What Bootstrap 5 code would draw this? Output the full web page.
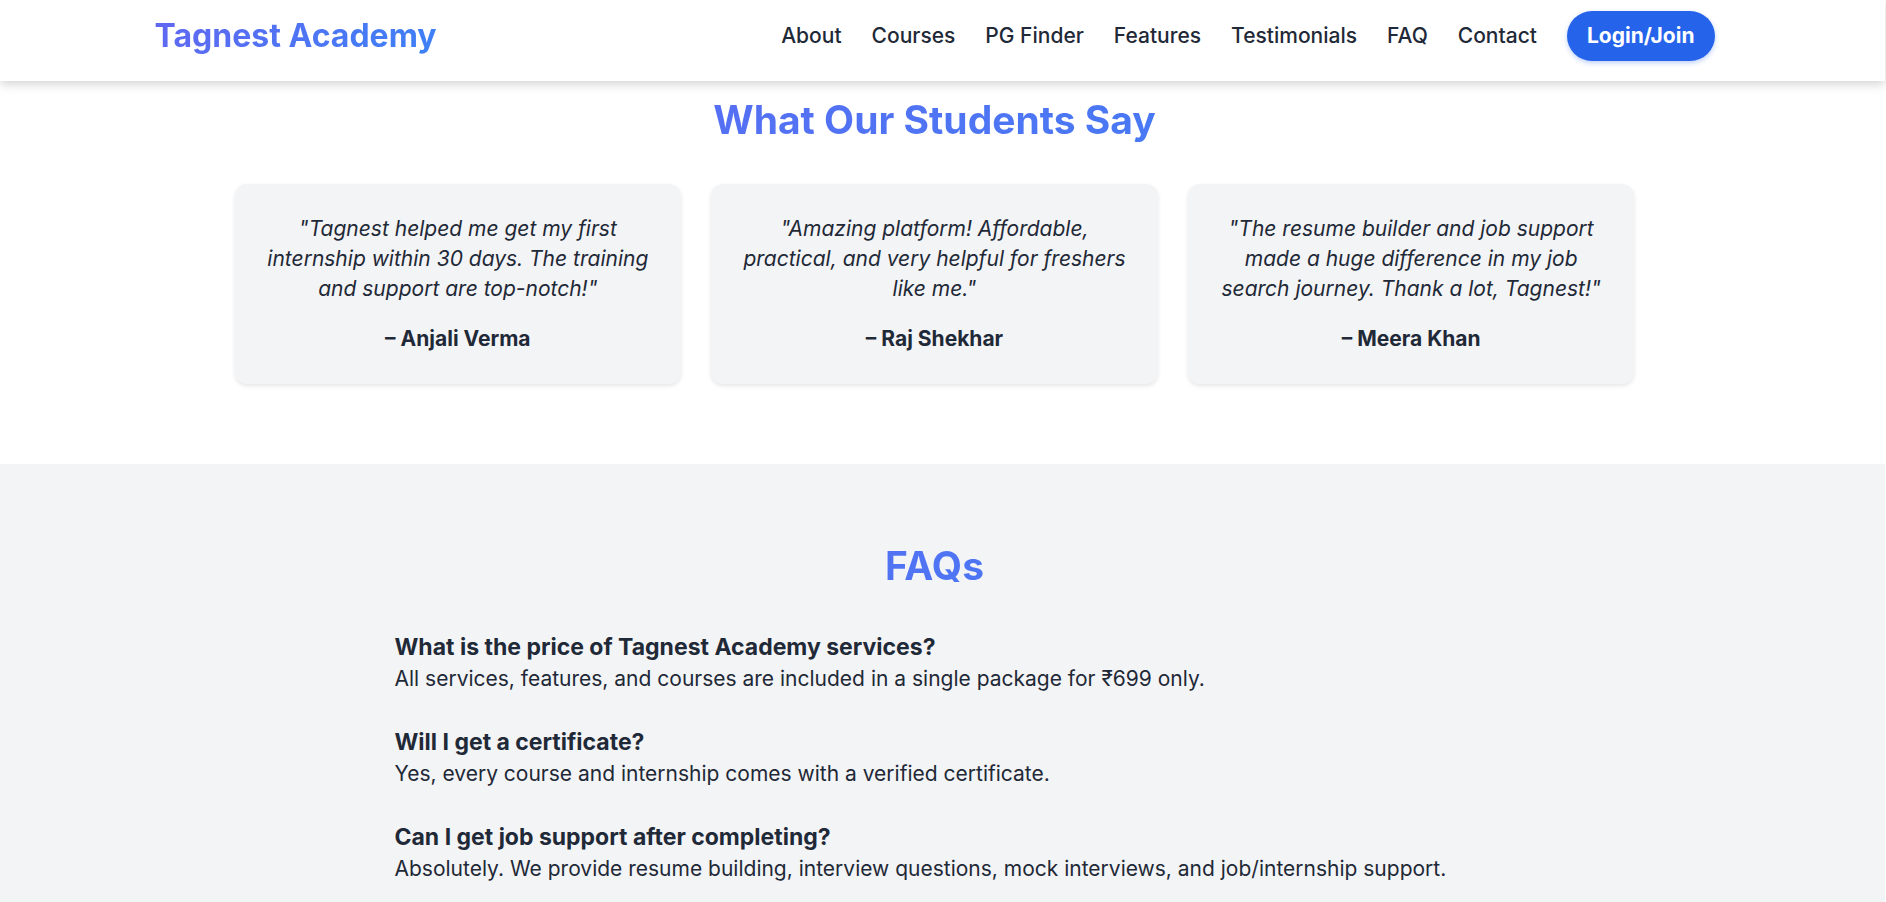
<!DOCTYPE html>
<html lang="en">
<head>
<meta charset="utf-8">
<meta name="viewport" content="width=device-width, initial-scale=1">
<title>Tagnest Academy</title>
<link href="https://cdn.jsdelivr.net/npm/bootstrap@5.3.0/dist/css/bootstrap.min.css" rel="stylesheet">
<style>
  :root { --ink: #1f2937; --mist: #f3f4f6; --brand: #2563eb; }
  html { background: #fff; }
  body {
    font-family: Inter, "Open Sans", sans-serif;
    font-size: 21px; line-height: 30px;
    color: var(--ink); background: #fff;
    padding-right: 1px;
  }
  .band { padding-right: 16px; }
  .wrap { width: 100%; margin: 0 auto; padding: 0 20px; }
  .wrap-nav { max-width: 1600px; }
  .wrap-cards { max-width: 1440px; }
  .wrap-faq { max-width: 1120px; }

  .topbar { background: #fff; padding-top: 11px; padding-bottom: 20px; box-shadow: 0 3px 10px rgba(0, 0, 0, .18); z-index: 10; }
  .tint { background: linear-gradient(135deg, #6366f1, #3b82f6); -webkit-background-clip: text; background-clip: text; color: transparent; }
  .logo { font-size: 32px; line-height: 48px; font-weight: 700; text-decoration: none; }
  .logo:hover { color: transparent; }
  .menu { column-gap: 30px; }
  .menu .nav-link { color: var(--ink); font-weight: 500; padding: 0; }
  .btn-join {
    font-size: 21px; line-height: 30px; font-weight: 700; color: #fff;
    background: var(--brand); border: 0; border-radius: 25px;
    padding: 10px 20px; box-shadow: 0 2px 5px rgba(37, 99, 235, .3);
  }
  .btn-join:hover { background: #1d4ed8; color: #fff; }

  .title { font-size: 39px; line-height: 48px; font-weight: 700; text-align: center; margin-bottom: 40px; }
  .voices { padding-top: 15px; padding-bottom: 80px; }
  .voices .row { --bs-gutter-x: 30px; }
  .voice { background: var(--mist); border: 0; border-radius: 12px; padding: 30px; text-align: center; color: var(--ink); box-shadow: 0 2px 4px rgba(0, 0, 0, .1); }
  .voice p { font-style: italic; margin-bottom: 20px; }
  .faqs { background: var(--mist); padding-top: 78px; padding-bottom: 16px; }
  .ask { font-size: 23px; line-height: 34px; font-weight: 700; margin: 0; }
  .faq-list { row-gap: 31px; }
</style>
</head>
<body class="d-flex flex-column min-vh-100">
<header class="topbar band sticky-top">
  <div class="wrap wrap-nav d-flex flex-wrap justify-content-between align-items-center">
    <a class="logo tint" href="#">Tagnest Academy</a>
    <nav class="nav menu align-items-center" aria-label="Main">
      <a class="nav-link" href="#about">About</a>
      <a class="nav-link" href="#courses">Courses</a>
      <a class="nav-link" href="#pg">PG Finder</a>
      <a class="nav-link" href="#features">Features</a>
      <a class="nav-link" href="#testimonials">Testimonials</a>
      <a class="nav-link" href="#faq">FAQ</a>
      <a class="nav-link" href="#contact">Contact</a>
      <button type="button" class="btn btn-join">Login/Join</button>
    </nav>
  </div>
</header>

<main class="d-flex flex-column flex-grow-1">
  <section id="testimonials" class="voices band">
    <div class="wrap wrap-cards">
      <h2 class="title tint">What Our Students Say</h2>
      <div class="row row-cols-1 row-cols-lg-3">
        <div class="col">
          <div class="card voice h-100">
            <p>"Tagnest helped me get my first internship within 30 days. The training and support are top-notch!"</p>
            <strong>– Anjali Verma</strong>
          </div>
        </div>
        <div class="col">
          <div class="card voice h-100">
            <p>"Amazing platform! Affordable, practical, and very helpful for freshers like me."</p>
            <strong>– Raj Shekhar</strong>
          </div>
        </div>
        <div class="col">
          <div class="card voice h-100">
            <p>"The resume builder and job support made a huge difference in my job search journey. Thank a lot, Tagnest!"</p>
            <strong>– Meera Khan</strong>
          </div>
        </div>
      </div>
    </div>
  </section>

  <section id="faq" class="faqs band flex-grow-1">
    <div class="wrap wrap-faq">
      <h2 class="title tint">FAQs</h2>
      <div class="faq-list d-flex flex-column">
        <div>
          <h3 class="ask">What is the price of Tagnest Academy services?</h3>
          <p class="mb-0">All services, features, and courses are included in a single package for ₹699 only.</p>
        </div>
        <div>
          <h3 class="ask">Will I get a certificate?</h3>
          <p class="mb-0">Yes, every course and internship comes with a verified certificate.</p>
        </div>
        <div>
          <h3 class="ask">Can I get job support after completing?</h3>
          <p class="mb-0">Absolutely. We provide resume building, interview questions, mock interviews, and job/internship support.</p>
        </div>
      </div>
    </div>
  </section>
</main>
<script src="https://cdn.jsdelivr.net/npm/bootstrap@5.3.0/dist/js/bootstrap.bundle.min.js"></script>
</body>
</html>
